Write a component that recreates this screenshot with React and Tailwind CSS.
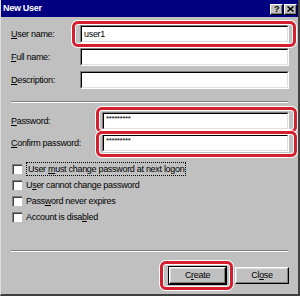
import React from "react";

const font = { fontFamily: '"Liberation Sans", Arial, sans-serif' };

const Ring = ({ className }) => (
  <div
    className={`pointer-events-none absolute z-10 rounded-[6px] border-[3px] border-[#d61f2e] shadow-[0_0_0_1px_#ffffff,inset_0_0_0_1px_#ffffff] ${className}`}
  />
);

const TextBox = ({ value, small, children }) => (
  <div className="relative flex-1 h-[18px]">
    <div className="h-full w-full border-t border-l border-[#808080] border-b border-r border-b-white border-r-white">
      <div className="h-full w-full bg-white border-t border-l border-black border-b border-r border-b-[#dfdfdf] border-r-[#dfdfdf] flex items-center px-[2px]">
        {small ? (
          <span className="text-[8px] leading-none -mt-[4px] tracking-[-0.4px]">{value}</span>
        ) : (
          <span className="text-[9px] leading-none">{value}</span>
        )}
      </div>
    </div>
    {children}
  </div>
);

const Label = ({ pre, u, post }) => (
  <span>
    {pre}
    <span className="underline underline-offset-[1px]">{u}</span>
    {post}
  </span>
);

const Field = ({ labelW, label, value, small, ring }) => (
  <div className="flex items-center">
    <div className={`${labelW} shrink-0`}>{label}</div>
    <TextBox value={value} small={small}>
      {ring}
    </TextBox>
  </div>
);

const Separator = () => (
  <div className="mx-[10px]">
    <div className="h-px bg-[#808080]" />
    <div className="h-px bg-white" />
  </div>
);

const Check = ({ children }) => (
  <div className="flex items-center h-[16px]">
    <div className="w-[10px] h-[10px] bg-white border-t border-l border-[#808080] border-b-white border-r-white shadow-[inset_1px_1px_0_#404040] shrink-0" />
    <div className="ml-[4px]">{children}</div>
  </div>
);

const TitleButton = ({ children }) => (
  <div className="w-[13px] h-[11px] bg-[#c0c0c0] border-t border-l border-white border-b border-r border-b-black border-r-black shadow-[inset_-1px_-1px_0_#808080] flex items-center justify-center">
    {children}
  </div>
);

const Button = ({ children, isDefault, ring }) => {
  const inner = (
    <div className="w-full h-full bg-[#c0c0c0] border-t border-l border-white border-b border-r border-b-black border-r-black shadow-[inset_-1px_-1px_0_#808080,inset_1px_1px_0_#dfdfdf] flex items-center justify-center">
      {children}
    </div>
  );
  if (isDefault)
    return (
      <div className="relative w-[59px] h-[19px] border border-black">
        {inner}
        {ring}
      </div>
    );
  return <div className="w-[54px] h-[17px]">{inner}</div>;
};

export default function App() {
  return (
    <div
      style={font}
      className="w-[300px] h-[296px] bg-[#c0c0c0] text-black text-[9px] leading-none tracking-[-0.3px] flex flex-col border-r-2 border-b-2 border-r-[#404040] border-b-[#404040] border-l border-l-[#dfdfdf] overflow-hidden"
    >
      {/* title bar */}
      <div className="h-[17px] bg-[#000080] flex items-center justify-between pl-[3px] pr-[1px] -ml-px">
        <span className="text-white font-bold text-[9px]">New User</span>
        <div className="flex gap-[1px] mt-[1px]">
          <TitleButton>
            <span className="font-bold text-[9px] leading-none">?</span>
          </TitleButton>
          <TitleButton>
            <svg width="7" height="6" viewBox="0 0 7 6">
              <path d="M0.5 0.5 L6.5 5.5 M6.5 0.5 L0.5 5.5" stroke="#000" strokeWidth="1.6" />
            </svg>
          </TitleButton>
        </div>
      </div>

      {/* name fields */}
      <div className="flex flex-col gap-[5px] mt-[8px] pl-[10px] pr-[9px]">
        <Field
          labelW="w-[69px]"
          label={<Label u="U" post="ser name:" />}
          value="user1"
          ring={<Ring className="-left-[8px] -right-[7px] -top-[4px] -bottom-[4px]" />}
        />
        <Field labelW="w-[69px]" label={<Label u="F" post="ull name:" />} />
        <Field labelW="w-[69px]" label={<Label u="D" post="escription:" />} />
      </div>

      <div className="mt-[12px]">
        <Separator />
      </div>

      {/* password fields */}
      <div className="flex flex-col gap-[4px] mt-[9px] pl-[10px] pr-[9px]">
        <Field
          labelW="w-[91px]"
          label={<Label u="P" post="assword:" />}
          value="*********"
          small
          ring={<Ring className="-left-[6px] -right-[8px] -top-[5px] -bottom-[3px]" />}
        />
        <Field
          labelW="w-[91px]"
          label={<Label u="C" post="onfirm password:" />}
          value="*********"
          small
          ring={<Ring className="-left-[6px] -right-[8px] -top-[3px] -bottom-[5px]" />}
        />
      </div>

      {/* options */}
      <div className="flex flex-col mt-[9px] pl-[11px]">
        <Check>
          <span className="border border-dotted border-black px-[1px] py-[1px]">
            <Label pre="User " u="m" post="ust change password at next logon" />
          </span>
        </Check>
        <Check>
          <Label pre="U" u="s" post="er cannot change password" />
        </Check>
        <Check>
          <Label pre="Pass" u="w" post="ord never expires" />
        </Check>
        <Check>
          <Label pre="Account is disa" u="b" post="led" />
        </Check>
      </div>

      <div className="mt-[25px]">
        <Separator />
      </div>

      {/* buttons */}
      <div className="flex justify-end items-center gap-[8px] mt-[14px] pr-[9px]">
        <Button
          isDefault
          ring={<Ring className="-left-[9px] -right-[7px] -top-[6px] -bottom-[6px]" />}
        >
          <Label pre="C" u="r" post="eate" />
        </Button>
        <Button>
          <Label pre="Cl" u="o" post="se" />
        </Button>
      </div>
    </div>
  );
}
